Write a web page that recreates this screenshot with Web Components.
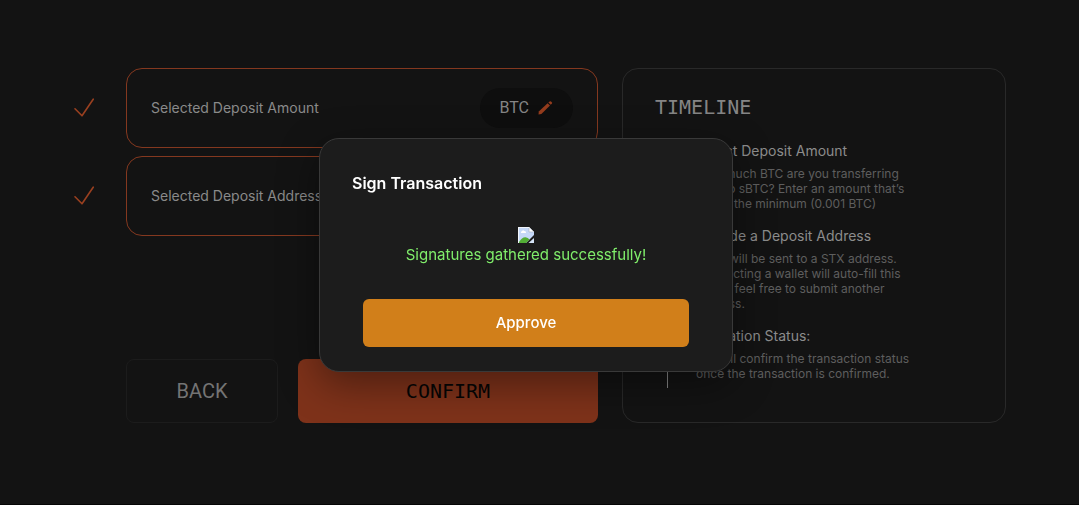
<!DOCTYPE html>
<html lang="en">
<head>
<meta charset="utf-8">
<title>Deposit – Sign Transaction</title>
<style>
  html, body { margin: 0; background: #131313; }
  body { min-height: 100vh; box-sizing: border-box; border-bottom: 1px solid #060606; font-family: Inter, "Liberation Sans", sans-serif; color: #8a8a8a; }
</style>
</head>
<body>
<deposit-page>
  <deposit-row slot="rows" label="Selected Deposit Amount"><edit-pill>BTC</edit-pill></deposit-row>
  <deposit-row slot="rows" label="Selected Deposit Address"></deposit-row>
  <action-button slot="actions" kind="back">BACK</action-button>
  <action-button slot="actions" kind="confirm">CONFIRM</action-button>
  <time-line slot="side" heading="TIMELINE">
    <time-step heading="Select Deposit Amount">How much BTC are you transferring<br>over to sBTC? Enter an amount that’s<br>above the minimum (0.001 BTC)</time-step>
    <time-step heading="Provide a Deposit Address">sBTC will be sent to a STX address.<br>Connecting a wallet will auto-fill this<br>in, but feel free to submit another<br>address.</time-step>
    <time-step heading="Validation Status:">We will confirm the transaction status<br>once the transaction is confirmed.</time-step>
  </time-line>
</deposit-page>
<sign-modal heading="Sign Transaction">
  Signatures gathered successfully!
  <action-button slot="action" kind="approve">Approve</action-button>
</sign-modal>

<script>
const define = (name, html, attrs = {}) => customElements.define(name, class extends HTMLElement {
  constructor() {
    super();
    const t = document.createElement('template');
    t.innerHTML = html;
    this.attachShadow({ mode: 'open' }).append(t.content.cloneNode(true));
  }
  connectedCallback() {
    for (const [attr, sel] of Object.entries(attrs))
      this.shadowRoot.querySelector(sel).textContent = this.getAttribute(attr) || '';
  }
});

define('deposit-page', `
<style>
  :host { display: block; padding: 68px 73px 80px 74px; }
  main { display: grid; grid-template-columns: 524fr 384fr; gap: 24px; }
  .left { display: flex; flex-direction: column; justify-content: space-between; min-width: 0; }
  .rows { display: grid; gap: 8px; }
  .actions { display: grid; grid-template-columns: 152px 1fr; gap: 20px; padding-left: 52px; }
</style>
<main>
  <div class="left">
    <div class="rows"><slot name="rows"></slot></div>
    <div class="actions"><slot name="actions"></slot></div>
  </div>
  <slot name="side"></slot>
</main>`);

define('deposit-row', `
<style>
  :host { display: grid; grid-template-columns: 20px 1fr; gap: 32px; align-items: center; }
  .card { display: flex; align-items: center; justify-content: space-between; box-sizing: border-box; height: 80px; padding: 0 24px; border: 1px solid #84381f; border-radius: 16px; font-size: 14px; line-height: 20px; }
  svg { display: block; }
</style>
<svg width="20" height="20" viewBox="0 0 20 20" fill="none" stroke="#9a4020" stroke-width="1.6" stroke-linecap="round" stroke-linejoin="round"><path d="M1 10.8 8 17.8 19.2 1.2"/></svg>
<div class="card"><span class="label"></span><slot></slot></div>`, { label: '.label' });

define('edit-pill', `
<style>
  :host { display: block; }
  button { display: flex; align-items: center; gap: 8px; height: 40px; padding: 0 20px; border: 0; border-radius: 20px; background: #0e0e0e; color: #858585; font: 16px/24px Roboto, sans-serif; }
  svg { display: block; }
</style>
<button type="button" aria-label="Edit amount"><slot></slot>
<svg width="16" height="16" viewBox="0 0 16 16" fill="#943c1d"><path d="M1.5 14.5 1.8 11.6 10.6 3.3 13 5.5 4.4 14Z"/><path d="M11.4 2.6 12.6 1.4Q13.3.9 14 1.4L15 2.4Q15.4 3 14.9 3.6L13.8 4.8Z"/></svg></button>`);

define('action-button', `
<style>
  :host { display: block; }
  button { display: block; box-sizing: border-box; width: 100%; height: 64px; border: 0; border-radius: 8px; font: 20px/24px "DejaVu Sans Mono", monospace; }
  :host([kind=back]) button { background: none; border: 1px solid #1c1c1c; color: #747474; font-family: Roboto, sans-serif; }
  :host([kind=confirm]) button { background: #7e321a; color: #050505; }
  :host([kind=approve]) button { height: 48px; border-radius: 6px; background: #d17f1a; color: #fff; font: 500 15px/24px Inter, sans-serif; }
</style>
<button type="button"><slot></slot></button>`);

define('time-line', `
<style>
  :host { display: block; box-sizing: border-box; padding: 26px 32px 34px; border: 1px solid #292929; border-radius: 16px; }
  h2 { margin: 0 0 22px; font: 20px/24px "DejaVu Sans Mono", monospace; color: #858585; }
  .track { display: grid; grid-template-columns: 1px 1fr; column-gap: 28px; padding-left: 12px; }
  .line { background: #858585; }
  .steps { display: grid; gap: 15px; padding-bottom: 7px; }
</style>
<h2></h2>
<div class="track"><div class="line"></div><div class="steps"><slot></slot></div></div>`, { heading: 'h2' });

define('time-step', `
<style>
  :host { display: block; white-space: nowrap; }
  h3 { margin: 0 0 5px; font-size: 14px; line-height: 20px; font-weight: 400; color: #8c8c8c; }
  p { margin: 0; font-size: 12px; line-height: 15px; color: #5e5e5e; }
</style>
<h3></h3><p><slot></slot></p>`, { heading: 'h3' });

define('sign-modal', `
<style>
  :host { position: fixed; inset: 0; display: grid; place-items: center; padding: 4px 27px 0 0; }
  section { box-sizing: border-box; width: 414px; max-width: 100%; padding: 32px 32px 24px; border: 1px solid #393939; border-radius: 20px; background: #1c1c1c; box-shadow: 0 12px 40px rgba(0,0,0,.4); }
  h1 { margin: 0 0 32px; font-size: 16px; line-height: 24px; font-weight: 600; color: #fff; }
  .body { display: grid; justify-items: center; padding: 0 11px; }
  p { margin: 0 0 32px; font-size: 15px; line-height: 24px; color: #80ee6b; }
  ::slotted(action-button) { width: 100%; }
  svg { display: block; }
</style>
<section role="dialog" aria-labelledby="title">
  <h1 id="title"></h1>
  <div class="body">
    <svg width="16" height="16" viewBox="0 0 16 16"><path d="M0 0H11L16 5V8L8 16H0Z" fill="#c5d8f8"/><path d="M0 0H11V1H1V16H0Z" fill="#f2f5fa"/><path d="M11 0 16 5H11Z" fill="#fff"/><path d="M11 1V5H15" fill="none" stroke="#a9b4c4" stroke-width=".7"/><path d="M3 6Q2.3 4.5 4 4.3 5 2.5 6.4 4.1 8.3 4 8 6Z" fill="#fff"/><path d="M1 15Q4 10 7.5 10.2 10 10.4 11.5 12.5L8 16H1Z" fill="#52ad35"/><path d="M16 11V16H10.5Z" fill="#d6e4f7"/></svg>
    <p><slot></slot></p>
    <slot name="action"></slot>
  </div>
</section>`, { heading: 'h1' });
</script>
</body>
</html>
